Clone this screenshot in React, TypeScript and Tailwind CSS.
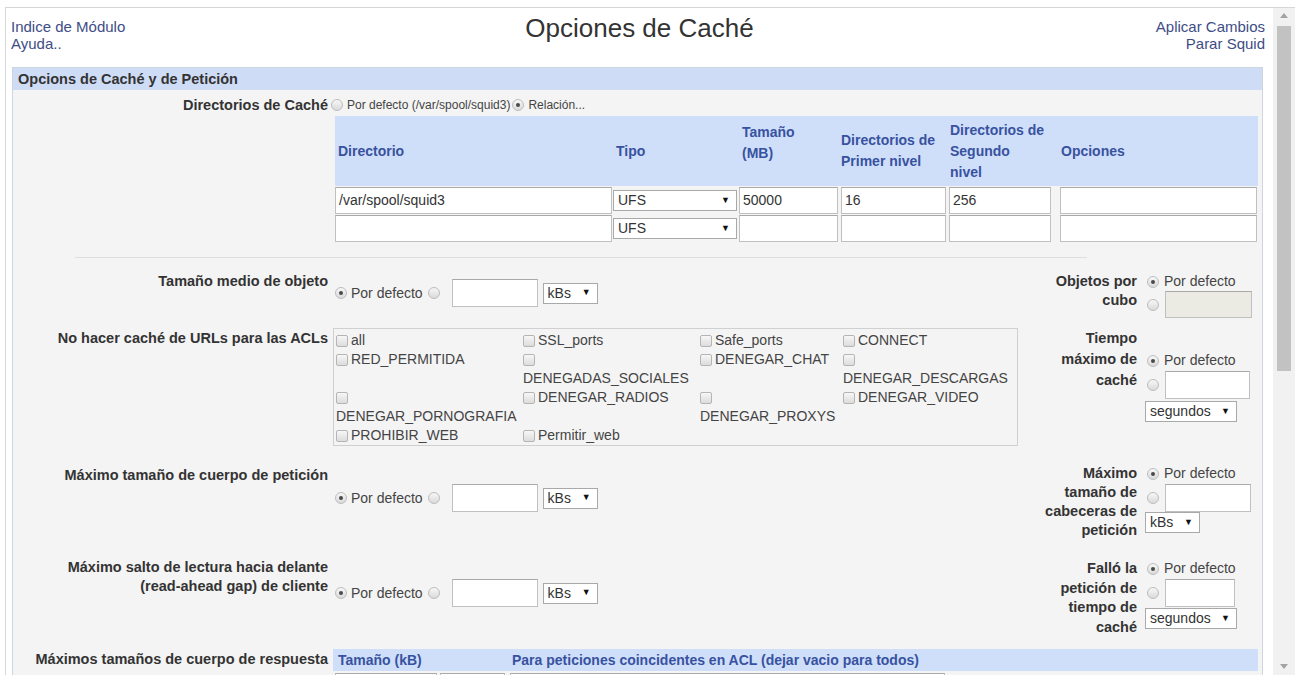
import type { ReactNode } from 'react';

type AclItem = { name: string; wrap?: boolean };

const aclRows: AclItem[][] = [
  [{ name: 'all' }, { name: 'SSL_ports' }, { name: 'Safe_ports' }, { name: 'CONNECT' }],
  [
    { name: 'RED_PERMITIDA' },
    { name: 'DENEGADAS_SOCIALES', wrap: true },
    { name: 'DENEGAR_CHAT' },
    { name: 'DENEGAR_DESCARGAS', wrap: true },
  ],
  [
    { name: 'DENEGAR_PORNOGRAFIA', wrap: true },
    { name: 'DENEGAR_RADIOS' },
    { name: 'DENEGAR_PROXYS', wrap: true },
    { name: 'DENEGAR_VIDEO' },
  ],
  [{ name: 'PROHIBIR_WEB' }, { name: 'Permitir_web' }],
];

const dirCols = [
  { w: 'w-[278px]', title: <>Directorio</> },
  { w: 'w-[126px]', title: <>Tipo</> },
  { w: 'w-[99px]', title: <>Tamaño<br />(MB)</>, up: true },
  { w: 'w-[109px]', title: <>Directorios de<br />Primer nivel</> },
  { w: 'w-[111px]', title: <>Directorios de<br />Segundo<br />nivel</> },
  { w: 'w-[200px]', title: <>Opciones</> },
];

function Radio({ checked = false, className = '' }: { checked?: boolean; className?: string }) {
  return (
    <span
      className={`relative inline-block w-[12px] h-[12px] shrink-0 rounded-full border border-[#bdbdbd] bg-linear-to-b from-[#f7f7f7] to-[#dadada] ${className}`}
    >
      {checked && <span className="absolute left-[3px] top-[3px] w-[4px] h-[4px] rounded-full bg-[#4a4a4a]" />}
    </span>
  );
}

function Check() {
  return (
    <span className="inline-block w-[12px] h-[12px] shrink-0 rounded-[2px] border border-[#b5b5b5] bg-linear-to-b from-[#f7f7f7] to-[#dcdcdc]" />
  );
}

function TextBox({ className = '', value = '', disabled = false }: { className?: string; value?: string; disabled?: boolean }) {
  return (
    <div
      className={`flex items-center shrink-0 border border-[#c0c0c0] border-t-[#a9a9a9] px-[3px] text-[14px] text-[#333] ${disabled ? 'bg-[#ebebe4]' : 'bg-white'} ${className}`}
    >
      {value}
    </div>
  );
}

function Select({ label, className = '' }: { label: string; className?: string }) {
  return (
    <div
      className={`flex items-center justify-between shrink-0 bg-white border border-[#a9a9a9] pl-[4px] pr-[6px] text-[14px] text-[#333] ${className}`}
    >
      <span>{label}</span>
      <span className="text-[9px] text-[#111]">▼</span>
    </div>
  );
}

// radio "Por defecto", radio + free value, unit select
function DefaultOrValue({ className = '' }: { className?: string }) {
  return (
    <div className={`flex items-center h-[28px] text-[14px] text-[#444] ${className}`}>
      <Radio checked className="ml-[2px]" />
      <span className="ml-[4px]">Por defecto</span>
      <Radio className="ml-[5px]" />
      <TextBox className="ml-[12px] w-[86px] h-[28px]" />
      <Select label="kBs" className="ml-[5px] w-[55px] h-[21px]" />
    </div>
  );
}

function Label({ children, className = '' }: { children: ReactNode; className?: string }) {
  return <div className={`text-right font-bold text-[14.5px] text-[#333] ${className}`}>{children}</div>;
}

function SideLabel({ children, className = '' }: { children: ReactNode; className?: string }) {
  return <div className={`text-right font-bold text-[14.5px] text-[#333] pr-[4px] ${className}`}>{children}</div>;
}

function DefaultLine() {
  return (
    <div className="flex items-center h-[19px] text-[14px] text-[#444]">
      <Radio checked className="ml-[6px]" />
      <span className="ml-[5px]">Por defecto</span>
    </div>
  );
}

function Header() {
  return (
    <div className="grid grid-cols-3 h-[59px] items-start">
      <div className="pl-[5px] pt-[10px] text-[15px] leading-[17px] text-[#3e4d85]">
        <div>Indice de Módulo</div>
        <div>Ayuda..</div>
      </div>
      <div className="pt-[5px] text-center text-[26px] leading-[30px] text-[#333]">Opciones de Caché</div>
      <div className="pr-[8px] pt-[10px] text-right text-[15px] leading-[17px] text-[#3e4d85]">
        <div>Aplicar Cambios</div>
        <div>Parar Squid</div>
      </div>
    </div>
  );
}

function CacheDirs() {
  const rows = [
    ['/var/spool/squid3', '50000', '16', '256', ''],
    ['', '', '', '', ''],
  ];
  return (
    <div className="ml-[322px] mt-[2px] w-[923px]">
      <div className="flex h-[70px] bg-[#cfdffa]">
        {dirCols.map((c, i) => (
          <div
            key={i}
            className={`${c.w} flex items-center px-[3px] font-bold text-[14px] leading-[21px] text-[#3852a0] ${c.up ? 'pb-[16px]' : ''}`}
          >
            <div>{c.title}</div>
          </div>
        ))}
      </div>
      {rows.map((r, i) => (
        <div key={i} className="flex h-[27px] mt-[1px]">
          <div className="w-[278px]">
            <TextBox className="w-[277px] h-[27px]" value={r[0]} />
          </div>
          <div className="w-[126px] flex items-center">
            <Select label="UFS" className="w-[124px] h-[21px]" />
          </div>
          <div className="w-[99px]">
            <TextBox className="w-[99px] h-[27px]" value={r[1]} />
          </div>
          <div className="w-[109px]">
            <TextBox className="ml-[3px] w-[105px] h-[27px]" value={r[2]} />
          </div>
          <div className="w-[111px]">
            <TextBox className="ml-[2px] w-[102px] h-[27px]" value={r[3]} />
          </div>
          <div className="w-[200px]">
            <TextBox className="ml-[2px] w-[197px] h-[27px]" value={r[4]} />
          </div>
        </div>
      ))}
    </div>
  );
}

function AclBox() {
  return (
    <div className="w-[685px] h-[118px] border border-[#d0d0d0] pt-[2px] grid grid-cols-[187px_177px_143px_1fr] content-start text-[14px] leading-[19px] text-[#444]">
      {aclRows.map((row, ri) =>
        [0, 1, 2, 3].map((ci) => {
          const item = row[ci];
          if (!item) return <div key={`${ri}-${ci}`} />;
          return item.wrap ? (
            <div key={item.name} className="pl-[2px]">
              <div className="flex items-center h-[19px]">
                <Check />
              </div>
              <div className="whitespace-nowrap">{item.name}</div>
            </div>
          ) : (
            <div key={item.name} className="flex items-center h-[19px] pl-[2px] whitespace-nowrap">
              <Check />
              <span className="ml-[3px]">{item.name}</span>
            </div>
          );
        })
      )}
    </div>
  );
}

function Scrollbar() {
  return (
    <div className="w-[22px] shrink-0 flex flex-col items-center bg-[#f1f1f1]">
      <svg className="mt-[5px]" width="8" height="5" viewBox="0 0 8 5">
        <path d="M0 5 L4 0 L8 5 Z" fill="#a3a3a3" />
      </svg>
      <div className="mt-[8px] w-[14px] h-[345px] bg-[#c2c2c2]" />
      <div className="flex-1" />
      <svg className="mb-[6px]" width="8" height="5" viewBox="0 0 8 5">
        <path d="M0 0 L8 0 L4 5 Z" fill="#a3a3a3" />
      </svg>
    </div>
  );
}

const rowGrid = 'grid grid-cols-[320px_708px_100px_1fr] items-start';

export default function App() {
  return (
    <div className="w-[1295px] h-[675px] overflow-hidden bg-white pt-[7px] pl-[5px] font-['Liberation_Sans',Arial,sans-serif]">
      <div className="flex h-[668px] border-t border-l border-[#d6d6d6]">
        <div className="flex-1 min-w-0 overflow-hidden">
          <Header />

          <div className="ml-[6px] mr-[10px] h-[620px] border border-[#cdd5e3] bg-[#f4f4f4]">
            <div className="h-[22px] bg-[#cfdcf6] pl-[5px] font-bold text-[14.5px] leading-[22px] text-[#333]">
              Opcions de Caché y de Petición
            </div>

            {/* cache directories */}
            <div className="flex items-start pt-[6px]">
              <Label className="w-[320px] pr-[5px] leading-[18px]">Directorios de Caché</Label>
              <div className="flex items-center h-[18px] text-[12px] text-[#444]">
                <Radio className="-ml-[2px]" />
                <span className="ml-[4px]">Por defecto (/var/spool/squid3)</span>
                <Radio checked className="ml-[2px]" />
                <span className="ml-[4px]">Relación...</span>
              </div>
            </div>
            <CacheDirs />

            <div className="mt-[15px] ml-[62px] w-[1012px] h-px bg-[#dedede]" />

            {/* average object size / objects per bucket */}
            <div className={`${rowGrid} mt-[13px] h-[48px]`}>
              <Label className="pr-[5px] pt-[1px] leading-[19px]">Tamaño medio de objeto</Label>
              <DefaultOrValue className="mt-[8px]" />
              <SideLabel className="pt-[1px] leading-[19px]">
                Objetos por<br />cubo
              </SideLabel>
              <div className="pt-[1px]">
                <DefaultLine />
                <div className="flex items-center h-[27px]">
                  <Radio className="ml-[6px]" />
                  <TextBox disabled className="ml-[6px] w-[87px] h-[27px]" />
                </div>
              </div>
            </div>

            {/* no-cache ACLs / max cache time */}
            <div className={`${rowGrid} mt-[9px] h-[118px]`}>
              <Label className="pr-[5px] pt-[1px] leading-[19px]">No hacer caché de URLs para las ACLs</Label>
              <AclBox />
              <SideLabel className="leading-[21px]">
                Tiempo<br />máximo de<br />caché
              </SideLabel>
              <div className="mt-[23px]">
                <DefaultLine />
                <div className="flex items-center h-[28px] mt-[1px]">
                  <Radio className="ml-[6px]" />
                  <TextBox className="ml-[6px] w-[85px] h-[28px]" />
                </div>
                <Select label="segundos" className="ml-[4px] mt-[2px] w-[92px] h-[21px]" />
              </div>
            </div>

            {/* request body / request headers */}
            <div className={`${rowGrid} mt-[18px] h-[77px]`}>
              <Label className="pr-[5px] pt-[2px] leading-[19px]">Máximo tamaño de cuerpo de petición</Label>
              <DefaultOrValue className="mt-[20px]" />
              <SideLabel className="leading-[19px]">
                Máximo<br />tamaño de<br />cabeceras de<br />petición
              </SideLabel>
              <div>
                <DefaultLine />
                <div className="flex items-center h-[28px] mt-[1px]">
                  <Radio className="ml-[6px]" />
                  <TextBox className="ml-[6px] w-[86px] h-[28px]" />
                </div>
                <Select label="kBs" className="ml-[4px] w-[55px] h-[21px]" />
              </div>
            </div>

            {/* read-ahead gap / negative ttl */}
            <div className={`${rowGrid} mt-[17px] h-[80px]`}>
              <Label className="pr-[5px] leading-[19px]">
                Máximo salto de lectura hacia delante<br />(read-ahead gap) de cliente
              </Label>
              <DefaultOrValue className="mt-[21px]" />
              <SideLabel className="pt-[1px] leading-[19.5px]">
                Falló la<br />petición de<br />tiempo de<br />caché
              </SideLabel>
              <div className="mt-[1px]">
                <DefaultLine />
                <div className="flex items-center h-[28px] mt-[1px]">
                  <Radio className="ml-[6px]" />
                  <TextBox className="ml-[6px] w-[70px] h-[28px]" />
                </div>
                <Select label="segundos" className="ml-[4px] mt-[1px] w-[92px] h-[21px]" />
              </div>
            </div>

            {/* reply body sizes */}
            <div className={`${rowGrid} mt-[11px]`}>
              <Label className="pr-[5px] leading-[20px]">Máximos tamaños de cuerpo de respuesta</Label>
              <div className="col-span-3">
                <div className="flex h-[22px] w-[925px] items-center bg-[#cfdffa] font-bold text-[14px] text-[#3852a0]">
                  <div className="w-[179px] pl-[5px]">Tamaño (kB)</div>
                  <div>Para peticiones coincidentes en ACL (dejar vacio para todos)</div>
                </div>
                <div className="flex mt-[2px]">
                  <TextBox className="ml-[2px] w-[102px] h-[26px]" />
                  <TextBox className="ml-[3px] w-[65px] h-[26px]" />
                  <TextBox className="ml-[5px] w-[435px] h-[26px]" />
                </div>
              </div>
            </div>
          </div>
        </div>
        <Scrollbar />
      </div>
    </div>
  );
}
